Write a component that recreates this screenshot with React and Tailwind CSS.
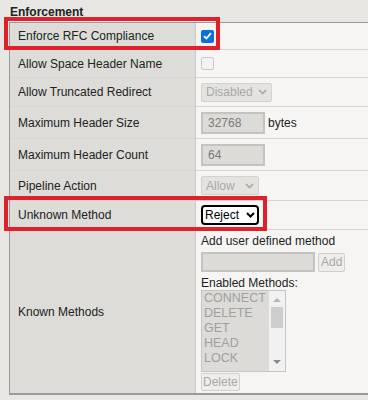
import React from 'react';

const Chevron = ({ color = '#a8a8a8', width = 1.6 }) => (
  <svg width="9" height="6" viewBox="0 0 9 6" className="shrink-0">
    <path d="M1 1 L4.5 4.5 L8 1" fill="none" stroke={color} strokeWidth={width} />
  </svg>
);

const DisabledSelect = ({ label, w }) => (
  <div className={`flex items-center justify-between h-[19px] px-[4px] bg-[#e4e3df] border border-[#d3d2ce] rounded-[2px] text-[#a8a8a8] ${w}`}>
    <span>{label}</span>
    <Chevron />
  </div>
);

const DisabledInput = ({ value, w }) => (
  <div className={`flex items-center h-[22px] px-[5px] bg-[#dcdbd7] border-2 border-[#c4c3bf] text-[#7a7a7a] ${w}`}>
    {value}
  </div>
);

const Row = ({ label, h, children }) => (
  <div className={`grid grid-cols-[186px_1fr] ${h} border-b border-[#d6d5d1]`}>
    <div className="flex items-center pl-[8px] bg-[#dddcd8] border-r border-[#c9c8c4] text-[#222]">{label}</div>
    <div className="flex items-center pl-[5px] bg-[#f6f5f3]">{children}</div>
  </div>
);

export default function App() {
  const methods = ['CONNECT', 'DELETE', 'GET', 'HEAD', 'LOCK'];

  return (
    <div
      className="relative w-[368px] h-[400px] overflow-hidden bg-[#e8e7e3] text-[12px] leading-[14px]"
      style={{ fontFamily: '"Liberation Sans", Arial, sans-serif' }}
    >
      <div className="h-[22px] pl-[10px] pt-[5px] font-bold text-[#222]">Enforcement</div>

      <div className="ml-[9px] border-l border-t border-b-2 border-[#9a9a9a]">
        <Row label="Enforce RFC Compliance" h="h-[27px]">
          <span className="flex items-center justify-center w-[13px] h-[13px] rounded-[2px] bg-[#0b6fe0]">
            <svg width="9" height="8" viewBox="0 0 9 8">
              <path d="M1 4.2 L3.4 6.5 L8 1.2" fill="none" stroke="#fff" strokeWidth="1.8" />
            </svg>
          </span>
        </Row>
        <Row label="Allow Space Header Name" h="h-[28px]">
          <span className="w-[13px] h-[13px] rounded-[2px] border border-[#c8c8c8] bg-[#f3f3f3]" />
        </Row>
        <Row label="Allow Truncated Redirect" h="h-[29px]">
          <DisabledSelect label="Disabled" w="w-[71px]" />
        </Row>
        <Row label="Maximum Header Size" h="h-[32px]">
          <DisabledInput value="32768" w="w-[64px]" />
          <span className="ml-[3px] text-[#222]">bytes</span>
        </Row>
        <Row label="Maximum Header Count" h="h-[32px]">
          <DisabledInput value="64" w="w-[64px]" />
        </Row>
        <Row label="Pipeline Action" h="h-[30px]">
          <DisabledSelect label="Allow" w="w-[58px]" />
        </Row>
        <Row label="Unknown Method" h="h-[29px]">
          <div className="flex items-center justify-between w-[58px] h-[20px] px-[2px] bg-white border-2 border-black rounded-[4px] text-black">
            <span>Reject</span>
            <Chevron color="#000" width={2} />
          </div>
        </Row>
        <div className="grid grid-cols-[186px_1fr] h-[163px]">
          <div className="flex items-center pl-[8px] bg-[#dddcd8] border-r border-[#c9c8c4] text-[#222]">Known Methods</div>
          <div className="flex flex-col items-start pl-[5px] pt-[4px] bg-[#f6f5f3] text-[#222]">
            <span>Add user defined method</span>
            <div className="flex items-center gap-[3px] mt-[4px]">
              <div className="w-[114px] h-[20px] bg-[#dcdbd7] border-2 border-[#c4c3bf]" />
              <div className="flex items-center h-[19px] px-[2px] border border-[#d0cfcb] rounded-[2px] bg-[#eeedea] text-[#a8a8a8]">Add</div>
            </div>
            <span className="mt-[4px]">Enabled Methods:</span>
            <div className="flex w-[85px] h-[82px] bg-[#dcdbd7] border border-[#c6c5c1]">
              <div className="flex-1 pl-[2px] text-[12.5px] leading-[15px] text-[#a0a0a0]">
                {methods.map((m) => (
                  <div key={m}>{m}</div>
                ))}
              </div>
              <div className="flex flex-col items-center w-[16px] bg-[#f1f1f1]">
                <svg width="8" height="5" viewBox="0 0 8 5" className="mt-[6px]">
                  <path d="M0 5 L4 1 L8 5 Z" fill="#b5b5b5" />
                </svg>
                <div className="w-[12px] h-[21px] mt-[5px] bg-[#cdcdcd]" />
                <svg width="8" height="5" viewBox="0 0 8 5" className="mt-auto mb-[6px]">
                  <path d="M0 0 L4 4 L8 0 Z" fill="#8a8a8a" />
                </svg>
              </div>
            </div>
            <div className="flex items-center h-[18px] mt-[1px] px-[1px] border border-[#d0cfcb] rounded-[2px] bg-[#eeedea] text-[#a8a8a8]">Delete</div>
          </div>
        </div>
      </div>

      {/* red highlight annotations */}
      <div className="absolute left-[4px] top-[17px] w-[216px] h-[33px] border-4 border-[#e2202b]" />
      <div className="absolute left-[4px] top-[196px] w-[263px] h-[35px] border-4 border-[#e2202b]" />
    </div>
  );
}
